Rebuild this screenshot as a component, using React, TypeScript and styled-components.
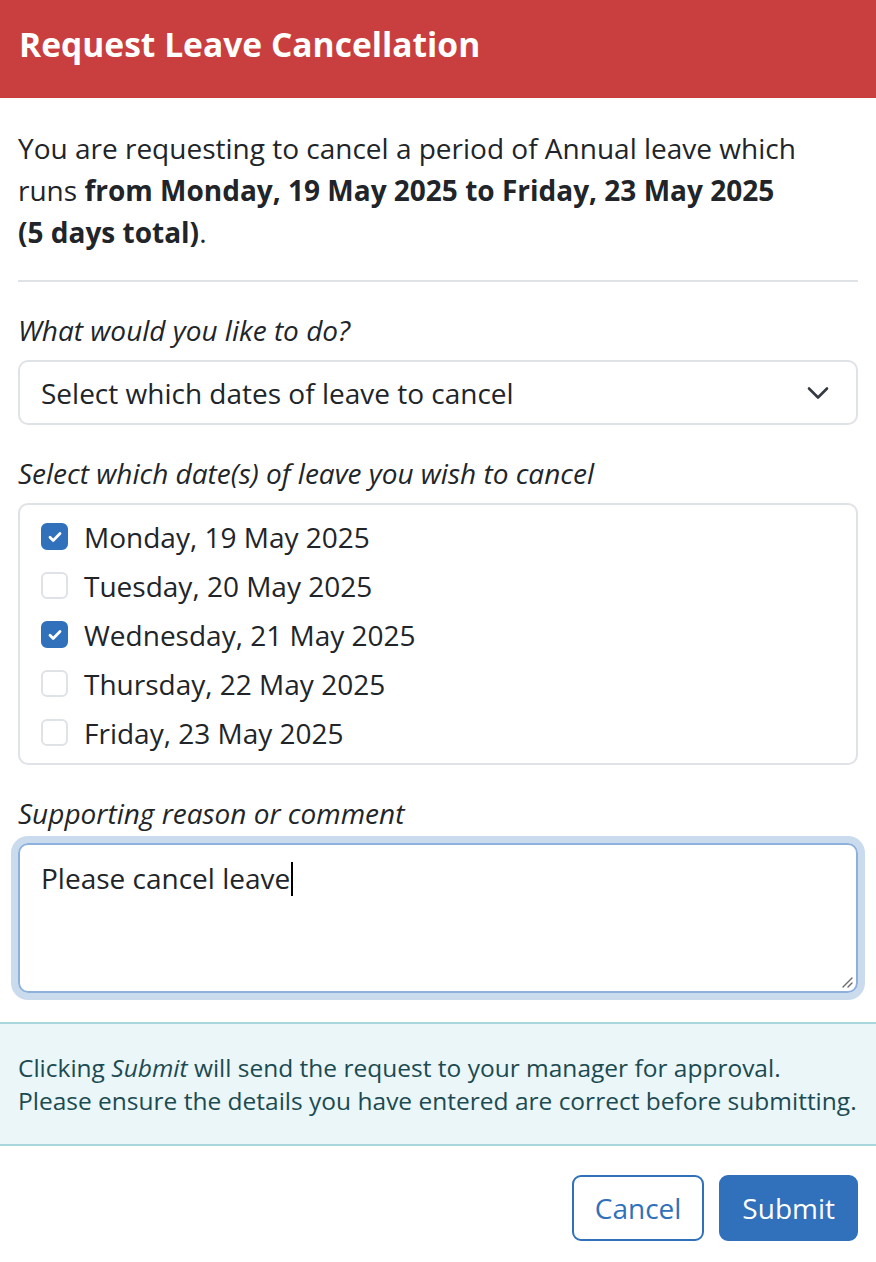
import React from 'react'
import styled, { createGlobalStyle } from 'styled-components'

const Colors = {
  Text: '#212529',
  Red: '#c93e3e',
  Blue: '#3170ba',
  Border: '#dfe2e6',
  InfoBg: '#eaf6f7',
  InfoBorder: '#aad7de',
  InfoText: '#1c4a52',
}

const days = [
  { label: 'Monday, 19 May 2025', checked: true },
  { label: 'Tuesday, 20 May 2025', checked: false },
  { label: 'Wednesday, 21 May 2025', checked: true },
  { label: 'Thursday, 22 May 2025', checked: false },
  { label: 'Friday, 23 May 2025', checked: false },
]

export default function App() {
  return (
    <>
      <GlobalStyle />
      <Modal>
        <Header>
          <Title>Request Leave Cancellation</Title>
        </Header>

        <Body>
          <Intro>
            You are requesting to cancel a period of Annual leave which runs{' '}
            <b>from Monday, 19 May 2025 to Friday, 23 May 2025 (5&nbsp;days&nbsp;total)</b>.
          </Intro>
          <Divider />

          <Field>
            <Label>What would you like to do?</Label>
            <Select>
              <span>Select which dates of leave to cancel</span>
              <svg width="22" height="14" viewBox="0 0 22 14" fill="none">
                <path d="M2 2.5l9 9 9-9" stroke="#343a40" strokeWidth="2.6" strokeLinecap="round" strokeLinejoin="round" />
              </svg>
            </Select>
          </Field>

          <Field>
            <Label>Select which date(s) of leave you wish to cancel</Label>
            <CheckList>
              {days.map((d) => (
                <CheckRow key={d.label}>
                  <Box $checked={d.checked}>
                    {d.checked && (
                      <svg width="14" height="12" viewBox="0 0 14 12" fill="none">
                        <path d="M2 6.2l3.2 3.2L12 2.6" stroke="#fff" strokeWidth="2.8" strokeLinecap="round" strokeLinejoin="round" />
                      </svg>
                    )}
                  </Box>
                  {d.label}
                </CheckRow>
              ))}
            </CheckList>
          </Field>

          <Field>
            <Label>Supporting reason or comment</Label>
            <TextArea>
              Please cancel leave<Caret />
              <Grip width="12" height="12" viewBox="0 0 12 12">
                <path d="M11 2L2 11M11 7L7 11" stroke="#6b6b6b" strokeWidth="1.4" strokeLinecap="round" />
              </Grip>
            </TextArea>
          </Field>
        </Body>

        <Notice>
          Clicking <i>Submit</i> will send the request to your manager for approval.
          <br />
          Please ensure the details you have entered are correct before submitting.
        </Notice>

        <Footer>
          <Button $variant="outline">Cancel</Button>
          <Button $variant="solid">Submit</Button>
        </Footer>
      </Modal>
    </>
  )
}

const GlobalStyle = createGlobalStyle`
  html, body {
    margin: 0;
    padding: 0;
    background: #fff;
  }
  body {
    font-family: 'Open Sans', 'Noto Sans', sans-serif;
    color: ${Colors.Text};
  }
`

const Modal = styled.div`
  width: 876px;
  min-height: 1262px;
  display: flex;
  flex-direction: column;
  background: #fff;
`

const Header = styled.header`
  height: 98px;
  display: flex;
  align-items: center;
  padding: 0 19px;
  box-sizing: border-box;
  background-color: ${Colors.Red};
`

const Title = styled.h1`
  margin: 0;
  color: #fff;
  font-size: 33.6px;
  line-height: 40px;
  font-weight: 700;
  margin-top: -10px;
`

const Body = styled.div`
  display: flex;
  flex-direction: column;
  padding: 29px 18px 29px;
`

const Intro = styled.p`
  margin: 0;
  font-size: 28px;
  line-height: 42px;

  b {
    font-weight: 700;
  }
`

const Divider = styled.hr`
  margin: 27px 0 27px;
  border: 0;
  border-top: 2px solid ${Colors.Border};
`

const Field = styled.div`
  display: flex;
  flex-direction: column;
  gap: 9px;

  & + & {
    margin-top: 27px;
  }
`

const Label = styled.label`
  font-size: 28px;
  line-height: 42px;
  font-style: italic;
`

const Select = styled.div`
  height: 65px;
  box-sizing: border-box;
  display: flex;
  align-items: center;
  justify-content: space-between;
  padding: 0 27px 0 21px;
  border: 2px solid ${Colors.Border};
  border-radius: 10px;
  font-size: 28px;
`

const CheckList = styled.div`
  display: flex;
  flex-direction: column;
  padding: 7px 21px 6px;
  border: 2px solid ${Colors.Border};
  border-radius: 10px;
`

const CheckRow = styled.div`
  display: flex;
  align-items: center;
  gap: 16px;
  height: 49px;
  font-size: 28px;
`

const Box = styled.span<{ $checked: boolean }>`
  width: 27px;
  height: 27px;
  box-sizing: border-box;
  display: flex;
  align-items: center;
  justify-content: center;
  border-radius: 6px;
  border: 2px solid ${(p) => (p.$checked ? Colors.Blue : Colors.Border)};
  background: ${(p) => (p.$checked ? Colors.Blue : '#fff')};
`

const TextArea = styled.div`
  position: relative;
  height: 150px;
  box-sizing: border-box;
  padding: 12px 21px;
  border: 2px solid #8db1dc;
  border-radius: 10px;
  box-shadow: 0 0 0 7px rgba(49, 112, 186, 0.25);
  font-size: 28px;
  line-height: 42px;
`

const Caret = styled.span`
  display: inline-block;
  width: 2px;
  height: 34px;
  margin-left: 1px;
  vertical-align: -7px;
  background: #000;
`

const Grip = styled.svg`
  position: absolute;
  right: 3px;
  bottom: 3px;
`

const Notice = styled.div`
  padding: 27px 18px 27px;
  border-top: 2px solid ${Colors.InfoBorder};
  border-bottom: 2px solid ${Colors.InfoBorder};
  background: ${Colors.InfoBg};
  color: ${Colors.InfoText};
  font-size: 24.5px;
  line-height: 33px;
`

const Footer = styled.footer`
  display: flex;
  justify-content: flex-end;
  gap: 15px;
  padding: 29px 18px 21px;
`

const Button = styled.button<{ $variant: 'outline' | 'solid' }>`
  height: 66px;
  padding: 0 21px;
  font-family: inherit;
  font-size: 28px;
  border-radius: 9px;
  border: 2px solid ${Colors.Blue};
  color: ${(p) => (p.$variant === 'solid' ? '#fff' : Colors.Blue)};
  background: ${(p) => (p.$variant === 'solid' ? Colors.Blue : '#fff')};
`
